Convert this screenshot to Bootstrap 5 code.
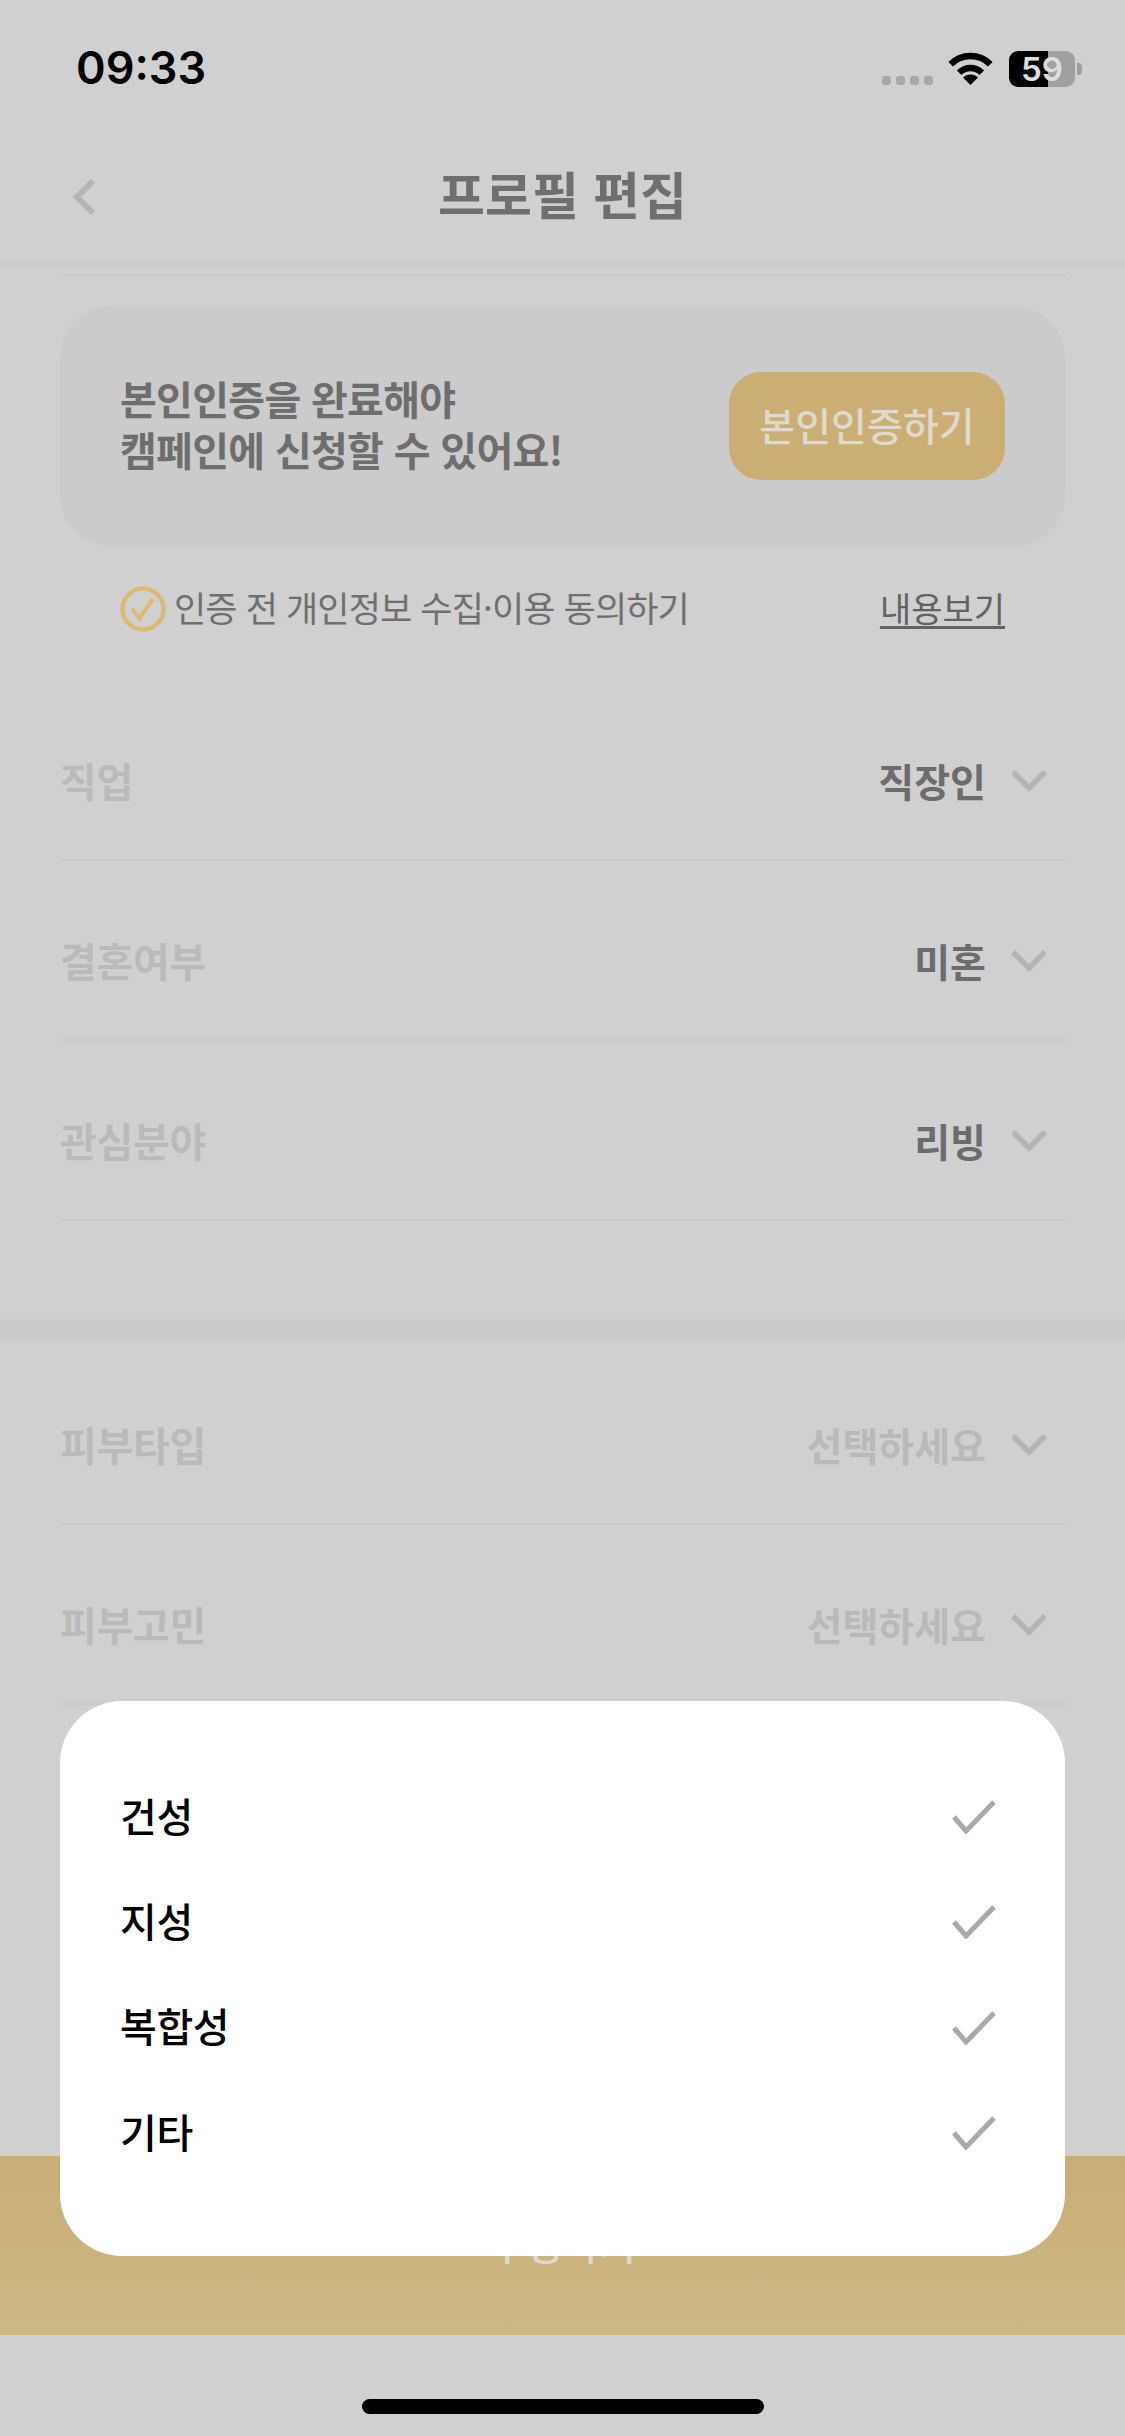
<!DOCTYPE html>
<html lang="ko">
<head>
  <meta charset="UTF-8">
  <title>프로필 편집</title>
  <link rel="stylesheet" href="https://cdn.jsdelivr.net/npm/bootstrap@5.3.3/dist/css/bootstrap.min.css">
  <style>
    html, body { background: #d0d0d0; }
    body { font-family: "Noto Sans CJK KR", "Noto Sans", sans-serif; }
    .screen { width: 1125px; height: 2436px; overflow: hidden; }
    .status-row { height: 130px; padding: 48px 43px 0 76px; }
    .clock { font-family: Inter, "Liberation Sans", sans-serif; font-weight: 600; font-size: 45px; line-height: 40px; color: #000; }
    .sig-dots { gap: 5px; margin-top: 28px; margin-right: 15px; }
    .sig-dots i { width: 9px; height: 9px; border-radius: 3px; background: #a8a8a8; display: block; }
    .batt { width: 66px; height: 36px; border-radius: 9px; margin: 3px 0 0 16px; background: linear-gradient(90deg, #000 59%, #a0a0a0 59%); color: #ddd; font: 600 33px/36px Inter, sans-serif; text-align: center; }
    .batt-nub { width: 5px; height: 12px; margin: 15px 0 0 2px; background: #a0a0a0; border-radius: 0 4px 4px 0; }
    .top-head { height: 135px; padding: 0 72px; border-bottom: 2px solid #c9c9c9; }
    .head-title { font-size: 51px; font-weight: 700; color: #6f6f6f; line-height: 1; margin: 0 0 6px; }
    .sub-line { height: 2px; margin: 9px 60px 0; background: #c9c9c9; }
    .verify-box { margin: 30px 60px 0; height: 240px; padding: 0 60px; background: #cbcbcb; border-radius: 52px; }
    .verify-text { font-size: 40px; font-weight: 700; line-height: 51px; color: #6e6e6e; letter-spacing: -0.7px; margin-bottom: 4px; }
    .verify-btn { width: 276px; height: 108px; background: #cbae73; border: 0; border-radius: 32px; color: #dedad0; font-size: 39px; font-weight: 500; padding: 0 0 4px; }
    .consent { height: 100px; margin: 13px 120px 22px; }
    .consent-text { font-size: 35px; color: #6f6f6f; margin-left: 8px; letter-spacing: -0.85px; margin-bottom: 3px; }
    .consent-link { font-size: 34px; color: #626262; text-decoration: underline; text-underline-offset: 4px; margin-bottom: 3px; }
    .field-row { height: 180px; margin: 0 60px; border-bottom: 2px solid #c9c9c9; padding-right: 18px; padding-top: 20px; }
    .field-label { font-size: 40px; font-weight: 700; color: #bababa; letter-spacing: -0.3px; }
    .field-val { font-size: 39px; font-weight: 700; color: #6c6c6c; margin-right: 25px; }
    .field-val.empty { color: #b9b9b9; }
    .band { height: 33px; margin-top: 91px; background: linear-gradient(#d0d0d0, #cbcbcb 35%, #cbcbcb 80%, #d0d0d0); }
    .save-bar { height: 179px; margin-top: 451px; background: linear-gradient(#c9ad75, #cdb985); color: #dcdad2; font-size: 40px; font-weight: 500; padding-top: 57px; }
    .home-bar { width: 402px; height: 15px; margin: 64px auto 0; background: #000; border-radius: 8px; }
    .pick-sheet { left: 60px; top: 1701px; width: 1005px; height: 555px; background: #fff; border-radius: 62px; padding: 61px 69px 0 60px; }
    .pick-row { height: 105.3px; color: #000; font-size: 40px; font-weight: 500; letter-spacing: -0.4px; }
    .pick-row svg { margin-top: 5px; }
  </style>
</head>
<body>
<div class="screen position-relative">
  <div class="status-row d-flex">
    <div class="clock">09:33</div>
    <div class="d-flex ms-auto">
      <div class="sig-dots d-flex"><i></i><i></i><i></i><i></i></div>
      <svg width="45" height="34" viewBox="0 0 45 34" class="mt-1" fill="none" stroke="#000" stroke-width="6.5">
        <path d="M2.7 12.2a28 28 0 0 1 39.6 0"/>
        <path d="M11.2 20.7a16 16 0 0 1 22.6 0"/>
        <path d="M22.5 33L15 25.5a10.600 10.600 0 0 1 15 0z" fill="#000" stroke="none"/>
      </svg>
      <div class="batt">59</div>
      <div class="batt-nub"></div>
    </div>
  </div>

  <div class="top-head d-flex align-items-center position-relative">
    <svg width="24" height="36" viewBox="0 0 24 36" fill="none" stroke="#b5b5b5" stroke-width="6"><path d="M21 2L5 18l16 16"/></svg>
    <h1 class="head-title position-absolute start-50 translate-middle-x">프로필 편집</h1>
  </div>
  <div class="sub-line"></div>

  <div class="verify-box d-flex align-items-center justify-content-between">
    <div class="verify-text">본인인증을 완료해야<br>캠페인에 신청할 수 있어요!</div>
    <button class="verify-btn" type="button">본인인증하기</button>
  </div>

  <div class="consent d-flex align-items-center">
    <svg width="46" height="46" viewBox="0 0 46 46" fill="none" stroke="#dcba72"><circle cx="23" cy="23" r="20.500" stroke-width="4.500"/><path d="M12 23l7.500 9.500L33 13" stroke-width="4"/></svg>
    <span class="consent-text">인증 전 개인정보 수집·이용 동의하기</span>
    <span class="consent-link ms-auto">내용보기</span>
  </div>

  <div class="field-row d-flex align-items-center">
    <span class="field-label">직업</span>
    <span class="field-val ms-auto">직장인</span>
    <svg width="36" height="24" viewBox="0 0 36 24" fill="none" stroke="#b4b4b4" stroke-width="5.500"><path d="M2 4l16 16L34 4"/></svg>
  </div>
  <div class="field-row d-flex align-items-center">
    <span class="field-label">결혼여부</span>
    <span class="field-val ms-auto">미혼</span>
    <svg width="36" height="24" viewBox="0 0 36 24" fill="none" stroke="#b4b4b4" stroke-width="5.500"><path d="M2 4l16 16L34 4"/></svg>
  </div>
  <div class="field-row d-flex align-items-center">
    <span class="field-label">관심분야</span>
    <span class="field-val ms-auto">리빙</span>
    <svg width="36" height="24" viewBox="0 0 36 24" fill="none" stroke="#b4b4b4" stroke-width="5.500"><path d="M2 4l16 16L34 4"/></svg>
  </div>

  <div class="band"></div>

  <div class="field-row d-flex align-items-center">
    <span class="field-label">피부타입</span>
    <span class="field-val empty ms-auto">선택하세요</span>
    <svg width="36" height="24" viewBox="0 0 36 24" fill="none" stroke="#b4b4b4" stroke-width="5.500"><path d="M2 4l16 16L34 4"/></svg>
  </div>
  <div class="field-row d-flex align-items-center">
    <span class="field-label">피부고민</span>
    <span class="field-val empty ms-auto">선택하세요</span>
    <svg width="36" height="24" viewBox="0 0 36 24" fill="none" stroke="#b4b4b4" stroke-width="5.500"><path d="M2 4l16 16L34 4"/></svg>
  </div>

  <div class="save-bar text-center">수정하기</div>
  <div class="home-bar"></div>

  <div class="pick-sheet position-absolute">
    <div class="pick-row d-flex align-items-center justify-content-between">건성
      <svg width="44" height="34" viewBox="0 0 44 34" fill="none" stroke="#a9a9a9" stroke-width="5"><path d="M2 17l12 14L42 2"/></svg></div>
    <div class="pick-row d-flex align-items-center justify-content-between">지성
      <svg width="44" height="34" viewBox="0 0 44 34" fill="none" stroke="#a9a9a9" stroke-width="5"><path d="M2 17l12 14L42 2"/></svg></div>
    <div class="pick-row d-flex align-items-center justify-content-between">복합성
      <svg width="44" height="34" viewBox="0 0 44 34" fill="none" stroke="#a9a9a9" stroke-width="5"><path d="M2 17l12 14L42 2"/></svg></div>
    <div class="pick-row d-flex align-items-center justify-content-between">기타
      <svg width="44" height="34" viewBox="0 0 44 34" fill="none" stroke="#a9a9a9" stroke-width="5"><path d="M2 17l12 14L42 2"/></svg></div>
  </div>
</div>
<script src="https://cdn.jsdelivr.net/npm/bootstrap@5.3.3/dist/js/bootstrap.bundle.min.js"></script>
</body>
</html>
